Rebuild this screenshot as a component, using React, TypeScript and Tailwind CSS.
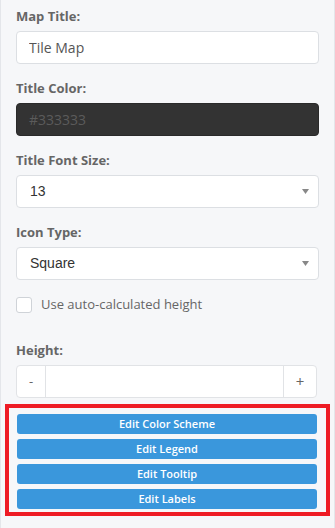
import React from "react";

const font = { fontFamily: '"Open Sans", "Liberation Sans", sans-serif' };

function Label({ children }: { children: React.ReactNode }) {
  return (
    <label className="mb-[5px] block text-[13px] font-bold leading-[20px] text-[#666]">
      {children}
    </label>
  );
}

function SelectBox({ value }: { value: string }) {
  return (
    <div className="flex h-[33px] items-center justify-between rounded-[4px] border border-[#dcdfe3] bg-white pl-[13px] pr-[9px]">
      <span className="text-[14px] text-[#333] [font-family:'Liberation_Sans',Arial,sans-serif]">
        {value}
      </span>
      <svg width="7" height="5" viewBox="0 0 7 5">
        <path d="M0 0 L7 0 L3.5 5 Z" fill="#888" />
      </svg>
    </div>
  );
}

export default function App() {
  const actions = ["Edit Color Scheme", "Edit Legend", "Edit Tooltip", "Edit Labels"];

  return (
    <div
      style={font}
      className="min-h-[528px] w-[335px] border-x border-[#e4e6ea] bg-[#f6f7f9] px-[15px] pt-[6px]"
    >
      {/* Map title */}
      <Label>Map Title:</Label>
      <input
        readOnly
        value="Tile Map"
        className="block h-[33px] w-full rounded-[4px] border border-[#dcdfe3] bg-white px-[12px] text-[14px] text-[#555] outline-none"
      />

      {/* Title color */}
      <div className="mt-[14px]">
        <Label>Title Color:</Label>
        <div className="flex h-[33px] items-center rounded-[4px] border border-[#2a2a2a] bg-[#333333] px-[12px] text-[14px] text-[#5b5b5b]">
          #333333
        </div>
      </div>

      <div className="mt-[14px]">
        <Label>Title Font Size:</Label>
        <SelectBox value="13" />
      </div>

      <div className="mt-[14px]">
        <Label>Icon Type:</Label>
        <SelectBox value="Square" />
      </div>

      {/* Checkbox */}
      <div className="mt-[17px] flex h-[16px] items-center gap-[9px]">
        <span className="h-[16px] w-[16px] rounded-[3px] border border-[#cfd3d8] bg-white" />
        <span className="text-[13px] text-[#666]">Use auto-calculated height</span>
      </div>

      <div className="mt-[27px]">
        <Label>Height:</Label>
        <div className="flex h-[33px] w-[301px] overflow-hidden rounded-[4px] border border-[#e1e3e6] bg-white text-[#666]">
          <div className="flex w-[29px] items-center justify-center border-r border-[#e1e3e6] text-[13px]">
            -
          </div>
          <div className="flex-1" />
          <div className="flex w-[33px] items-center justify-center border-l border-[#e1e3e6] text-[15px]">
            +
          </div>
        </div>
      </div>

      {/* Actions */}
      <div className="-mx-[11px] mt-[6px] flex flex-col gap-[5px] border-4 border-[#ee1c25] pb-[3px] pl-[8px] pr-[9px] pt-[6px]">
        {actions.map((a) => (
          <button
            key={a}
            className="h-[20px] w-full rounded-[3px] bg-[#3a97dc] text-[11px] font-semibold leading-[20px] text-white"
          >
            {a}
          </button>
        ))}
      </div>
    </div>
  );
}
